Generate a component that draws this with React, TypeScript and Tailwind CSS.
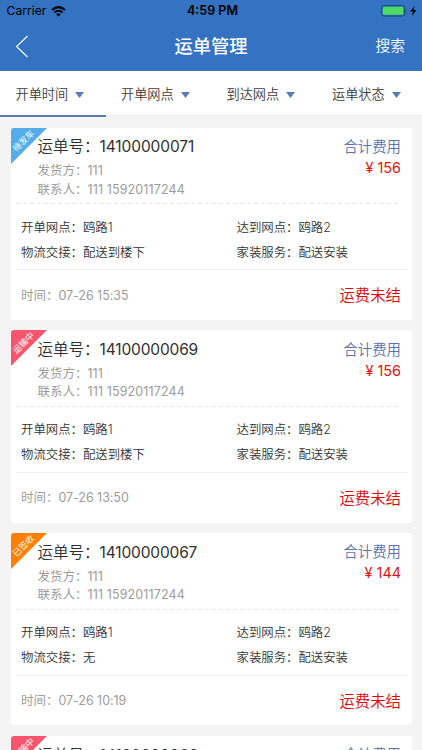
import type { ReactNode } from 'react';

type Order = {
  id: string;
  idSpacing: string;
  status: string;
  color: string;
  handover: string;
  time: string;
  fee: string;
};

const orders: Order[] = [
  { id: '14100000071', idSpacing: 'tracking-[-0.1px]', status: '待发车', color: 'text-[#54ade8]', handover: '配送到楼下', time: '07-26 15:35', fee: '156' },
  { id: '14100000069', idSpacing: 'tracking-[-0.15px]', status: '运输中', color: 'text-[#f7556d]', handover: '配送到楼下', time: '07-26 13:50', fee: '156' },
  { id: '14100000067', idSpacing: 'tracking-[-0.15px]', status: '已签收', color: 'text-[#ff8000]', handover: '无', time: '07-26 10:19', fee: '144' },
  { id: '14100000066', idSpacing: 'tracking-[-0.15px]', status: '运输中', color: 'text-[#f7556d]', handover: '配送到楼下', time: '07-26 10:12', fee: '144' },
];

const tabs = ['开单时间', '开单网点', '到达网点', '运单状态'];

function StatusBar() {
  return (
    <div className="grid h-[22px] grid-cols-3 items-center text-black">
      <div className="flex items-center pl-[6.5px]">
        <span className="text-[12.2px] leading-[22px]">Carrier</span>
        <svg className="ml-[5px] h-[11px] w-[15px]" viewBox="0 0 15 11">
          <g fill="none" stroke="currentColor" strokeWidth="2.1">
            <path d="M1 4 Q7.5 -1.8 14 4" />
            <path d="M3.5 6.5 Q7.5 3 11.5 6.5" />
          </g>
          <path d="M5.2 8.2 Q7.5 6.3 9.8 8.2 L7.5 10.5Z" fill="currentColor" />
        </svg>
      </div>
      <div className="pl-[3px] text-center text-[12.5px] leading-[22px] font-semibold">4:59 PM</div>
      <div className="flex items-center justify-end pr-[4.5px]">
        <svg className="h-[12px] w-[37px]" viewBox="0 0 37 12">
          <rect x="0.6" y="0.6" width="23" height="10.4" rx="2.4" fill="none" stroke="#174875" strokeWidth="1" />
          <rect x="1.8" y="1.8" width="20.6" height="8" rx="1.2" fill="#4cd964" />
          <path d="M25 4.1 Q26.6 5.8 25 7.5Z" fill="#174875" />
          <path d="M33.6 .9 L29.2 6.5 H32 L30.9 11 L35.4 5 H32.6Z" fill="#000" />
        </svg>
      </div>
    </div>
  );
}

function Field({ label, children }: { label: string; children: ReactNode }) {
  return (
    <div className="flex whitespace-nowrap">
      <span>{label}：</span>
      <span>{children}</span>
    </div>
  );
}

function OrderCard({ order }: { order: Order }) {
  return (
    <article className="relative h-[192.3px] shrink-0 overflow-hidden rounded-[3px] bg-white">
      <svg className={`absolute top-0 left-0 h-[36px] w-[36px] ${order.color}`} viewBox="0 0 36 36">
        <path d="M0 0H36L0 36Z" fill="currentColor" />
        <text x="12.4" y="15.9" transform="rotate(-45 12.4 12.7)" textAnchor="middle" fontSize="8.7" fill="#fff">
          {order.status}
        </text>
      </svg>
      <div className="flex h-[75.5px] justify-between pt-[8.4px] pr-[10.5px] pl-[27px]">
        <div>
          <div className="flex h-[22px] items-center text-[15.5px] text-[#303030]">
            <span className="font-[350]">运单号：</span>
            <span className={order.idSpacing}>{order.id}</span>
          </div>
          <div className="mt-[4.2px] text-[12.5px] leading-[18.6px] text-[#9c9c9c]">
            <Field label="发货方">111</Field>
            <Field label="联系人">
              <span className="tracking-[0.12px]">111 15920117244</span>
            </Field>
          </div>
        </div>
        <div className="text-right">
          <div className="text-[14.4px] leading-[22px] font-[350] text-[#5873b0]">合计费用</div>
          <div className="text-[14.4px] leading-[20px] text-[#e60f12]">¥ {order.fee}</div>
        </div>
      </div>
      <svg className="ml-[5.5px] block h-px w-[382px]" viewBox="0 0 382 1">
        <path d="M0 .5H382" stroke="#e8e8e8" strokeDasharray="4 3" />
      </svg>
      <div className="grid h-[65px] grid-cols-[215.5px_1fr] grid-rows-[25px_25px] items-center pt-[11.4px] pl-[10.5px] text-[12.4px] font-[350] text-[#333]">
        <Field label="开单网点">鸥路1</Field>
        <Field label="达到网点">鸥路2</Field>
        <Field label="物流交接">{order.handover}</Field>
        <Field label="家装服务">配送安装</Field>
      </div>
      <div className="mr-[4px] ml-[5.5px] h-px bg-[#f0f0f0]" />
      <div className="flex h-[49.5px] items-center justify-between pt-[2.6px] pr-[10.5px] pl-[10.5px]">
        <div className="text-[12.5px] tracking-[-0.04px] text-[#9c9c9c]">
          <Field label="时间">{order.time}</Field>
        </div>
        <span className="text-[15.4px] font-[350] text-[#e60008]">运费未结</span>
      </div>
    </article>
  );
}

export default function App() {
  return (
    <main className="flex h-[750px] w-[422px] flex-col overflow-hidden bg-[#f4f4f4] font-['Inter','Noto_Sans_CJK_SC',sans-serif]">
      <header className="h-[71px] shrink-0 bg-[#3472c2]">
        <StatusBar />
        <div className="grid h-[49px] grid-cols-[1fr_auto_1fr] items-center text-white">
          <svg className="ml-[15px] h-[24px] w-[14px]" viewBox="0 0 14 24" fill="none" stroke="currentColor" strokeWidth="1.1">
            <path d="M12.5 1 L1.5 11.5 L12.5 22" />
          </svg>
          <h1 className="text-[18.3px] font-medium">运单管理</h1>
          <span className="pr-[17px] text-right text-[14.8px] font-[350]">搜索</span>
        </div>
      </header>
      <nav className="grid h-[46px] shrink-0 grid-cols-4">
        {tabs.map((tab, i) => (
          <div key={tab} className="flex flex-col">
            <div className="flex h-[44px] items-center bg-white pt-[3px] pl-[15.5px] text-[13.2px] font-[350] text-[#3c3c3c]">
              {tab}
              <svg className="ml-[7px] h-[6px] w-[9px]" viewBox="0 0 9 6">
                <path d="M0 0H9L4.5 6Z" fill="#5b7bb5" />
              </svg>
            </div>
            <div className={i === 0 ? 'h-[2px] bg-[#5977b2]' : 'h-px bg-[#ebebeb]'} />
          </div>
        ))}
      </nav>
      <section className="flex flex-col gap-[10.5px] px-[10.5px] pt-[10.5px]">
        {orders.map((order) => (
          <OrderCard key={order.id} order={order} />
        ))}
      </section>
    </main>
  );
}
